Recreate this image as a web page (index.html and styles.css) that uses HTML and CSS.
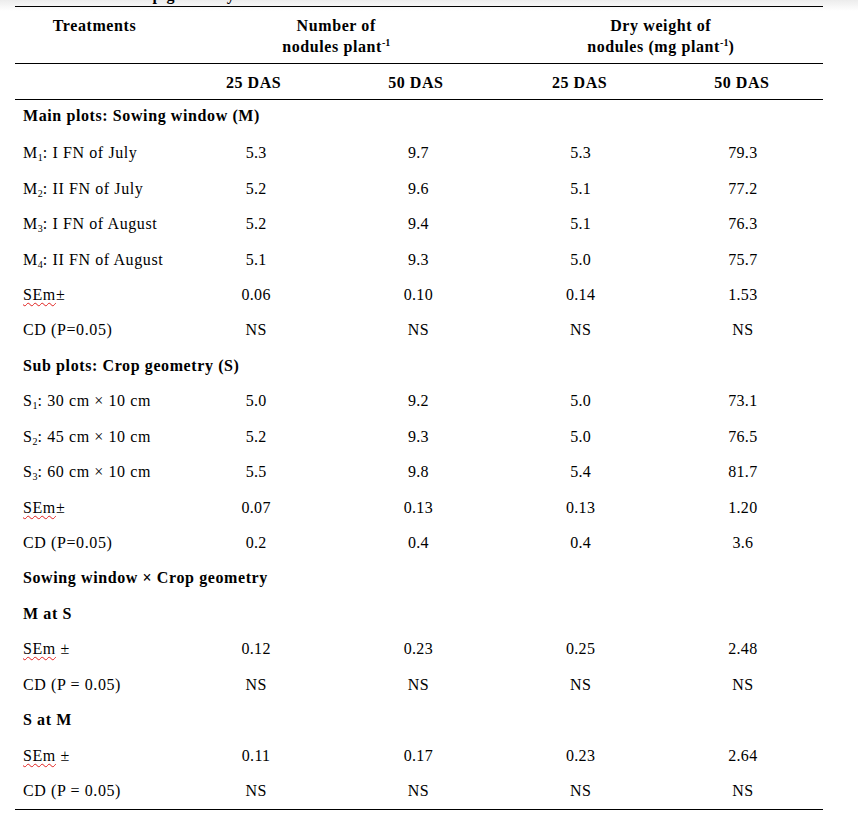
FILE: index.html
```html
<!DOCTYPE html>
<html lang="en">
<head>
<meta charset="utf-8">
<title>Nodulation table</title>
<link rel="stylesheet" href="styles.css">
</head>
<body>
<div class="page">
  <div class="caption-strip"><p class="caption">window and crop geometry</p></div>
  <div class="table">
    <div class="row head1">
      <div class="cell c-label">Treatments</div>
      <div class="cell span2">Number of<br>nodules plant<sup>-1</sup></div>
      <div class="cell span2">Dry weight of<br>nodules (mg plant<sup>-1</sup>)</div>
    </div>
    <div class="row head2">
      <div class="cell"></div>
      <div class="cell num hl">25 DAS</div>
      <div class="cell num hl">50 DAS</div>
      <div class="cell num">25 DAS</div>
      <div class="cell num">50 DAS</div>
    </div>
    <div class="body">
      <div class="row group first"><div class="cell lbl">Main plots: Sowing window (M)</div></div>
      <div class="row"><div class="cell lbl">M<sub>1</sub>: I FN of July</div><div class="cell num">5.3</div><div class="cell num">9.7</div><div class="cell num">5.3</div><div class="cell num">79.3</div></div>
      <div class="row"><div class="cell lbl">M<sub>2</sub>: II FN of July</div><div class="cell num">5.2</div><div class="cell num">9.6</div><div class="cell num">5.1</div><div class="cell num">77.2</div></div>
      <div class="row"><div class="cell lbl">M<sub>3</sub>: I FN of August</div><div class="cell num">5.2</div><div class="cell num">9.4</div><div class="cell num">5.1</div><div class="cell num">76.3</div></div>
      <div class="row"><div class="cell lbl">M<sub>4</sub>: II FN of August</div><div class="cell num">5.1</div><div class="cell num">9.3</div><div class="cell num">5.0</div><div class="cell num">75.7</div></div>
      <div class="row"><div class="cell lbl"><span class="spell">SEm</span>±</div><div class="cell num">0.06</div><div class="cell num">0.10</div><div class="cell num">0.14</div><div class="cell num">1.53</div></div>
      <div class="row"><div class="cell lbl">CD (P=0.05)</div><div class="cell num">NS</div><div class="cell num">NS</div><div class="cell num">NS</div><div class="cell num">NS</div></div>
      <div class="row group"><div class="cell lbl">Sub plots: Crop geometry (S)</div></div>
      <div class="row"><div class="cell lbl">S<sub>1</sub>: 30 cm × 10 cm</div><div class="cell num">5.0</div><div class="cell num">9.2</div><div class="cell num">5.0</div><div class="cell num">73.1</div></div>
      <div class="row"><div class="cell lbl">S<sub>2</sub>: 45 cm × 10 cm</div><div class="cell num">5.2</div><div class="cell num">9.3</div><div class="cell num">5.0</div><div class="cell num">76.5</div></div>
      <div class="row"><div class="cell lbl">S<sub>3</sub>: 60 cm × 10 cm</div><div class="cell num">5.5</div><div class="cell num">9.8</div><div class="cell num">5.4</div><div class="cell num">81.7</div></div>
      <div class="row"><div class="cell lbl"><span class="spell">SEm</span>±</div><div class="cell num">0.07</div><div class="cell num">0.13</div><div class="cell num">0.13</div><div class="cell num">1.20</div></div>
      <div class="row"><div class="cell lbl">CD (P=0.05)</div><div class="cell num">0.2</div><div class="cell num">0.4</div><div class="cell num">0.4</div><div class="cell num">3.6</div></div>
      <div class="row group"><div class="cell lbl">Sowing window × Crop geometry</div></div>
      <div class="row group"><div class="cell lbl">M at S</div></div>
      <div class="row"><div class="cell lbl"><span class="spell">SEm</span> ±</div><div class="cell num">0.12</div><div class="cell num">0.23</div><div class="cell num">0.25</div><div class="cell num">2.48</div></div>
      <div class="row"><div class="cell lbl">CD (P = 0.05)</div><div class="cell num">NS</div><div class="cell num">NS</div><div class="cell num">NS</div><div class="cell num">NS</div></div>
      <div class="row group"><div class="cell lbl">S at M</div></div>
      <div class="row"><div class="cell lbl"><span class="spell">SEm</span> ±</div><div class="cell num">0.11</div><div class="cell num">0.17</div><div class="cell num">0.23</div><div class="cell num">2.64</div></div>
      <div class="row"><div class="cell lbl">CD (P = 0.05)</div><div class="cell num">NS</div><div class="cell num">NS</div><div class="cell num">NS</div><div class="cell num">NS</div></div>
    </div>
  </div>
</div>
</body>
</html>
```

FILE: styles.css
```css
html, body {
  margin: 0;
  padding: 0;
}
body {
  background: #fff linear-gradient(to bottom, #ececec 0, #ffffff 11px) no-repeat;
  font-family: "Liberation Serif", "Times New Roman", serif;
  font-size: 16px;
  color: #000;
}
.page {
  width: 808px;
  margin-left: 15px;
}
.caption-strip {
  height: 6px;
  overflow: hidden;
  display: flex;
  align-items: flex-end;
}
.caption {
  margin: 0 0 2px 20px;
  font-weight: bold;
  line-height: 18px;
  letter-spacing: 0.6px;
  white-space: nowrap;
}
.table {
  border-top: 1px solid #000;
  border-bottom: 1px solid #000;
}
.row {
  display: grid;
  grid-template-columns: 159px repeat(4, 1fr);
}
.head1 {
  font-weight: bold;
  line-height: 21px;
  letter-spacing: 0.6px;
  border-bottom: 1px solid #000;
}
.head1 .cell {
  padding: 8px 0 6px;
  text-align: center;
}
.head1 .span2 {
  grid-column: span 2;
}
sup {
  font-size: 10px;
  line-height: 0;
  letter-spacing: 0;
  vertical-align: 6px;
}
sub {
  font-size: 10px;
  line-height: 0;
  letter-spacing: 0;
  vertical-align: -3px;
}
.head2 {
  height: 35px;
  font-weight: bold;
  letter-spacing: 0.5px;
  border-bottom: 1px solid #000;
  align-items: center;
}
.head2 .cell {
  line-height: 18px;
  padding-top: 3px;
}
.head2 .hl {
  padding-right: 3px;
}
.body .row {
  height: 35.45px;
  align-items: center;
  line-height: 18px;
}
.body .row.first {
  height: 35.5px;
  padding-bottom: 3px;
  box-sizing: border-box;
}
.group {
  font-weight: bold;
}
.group .lbl {
  grid-column: 1 / -1;
}
.lbl {
  padding-left: 8px;
  letter-spacing: 0.6px;
  white-space: nowrap;
}
.num {
  text-align: center;
}
.body .num {
  padding-left: 2px;
  letter-spacing: 0.3px;
}
.spell {
  text-decoration: underline wavy #e0201e;
  text-decoration-thickness: 1px;
  text-underline-offset: 2px;
}
```
